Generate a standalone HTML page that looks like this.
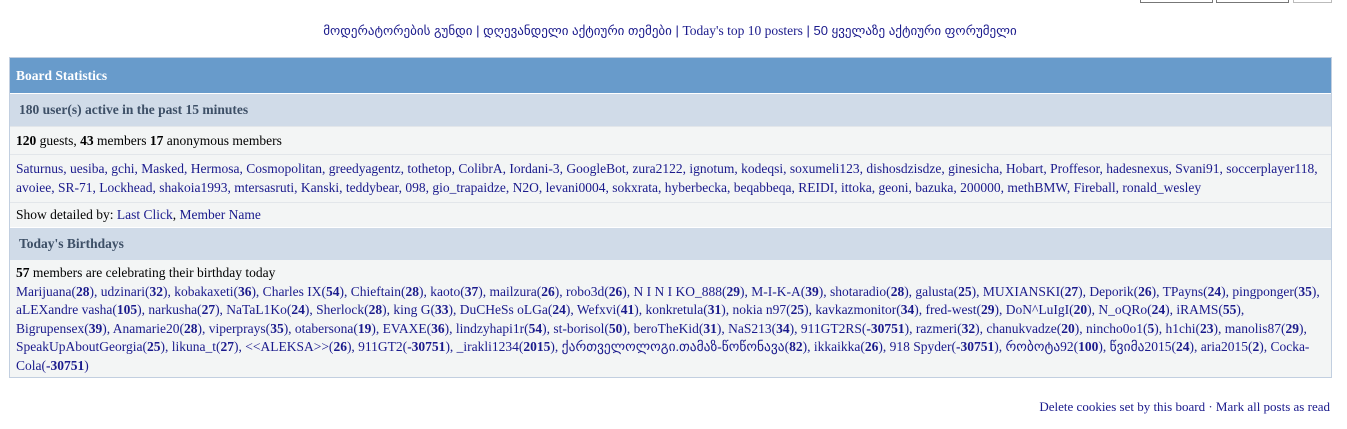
<!DOCTYPE html>
<html><head><meta charset="utf-8"><style>
body{margin:0;background:#fff;font-family:"Liberation Serif",serif;font-size:13.5px;color:#000;width:1347px;height:429px;overflow:hidden;position:relative}
a{color:#1a1a8c;text-decoration:none}
.btn{position:absolute;top:-6px;height:7px;border:1px solid #777;background:#fff}
.nav{position:absolute;top:23px;left:0;width:1340px;text-align:center;font-family:"Liberation Sans","DejaVu Sans",sans-serif;font-size:13px;color:#1a1a8c}
.box{position:absolute;left:9px;top:57px;width:1321px;height:319px;border:1px solid #c2cfe0;background:#f3f5f5}
.h1{height:35px;background:#689bcb;color:#fff;font-weight:bold;font-size:13.5px;line-height:36px;padding-left:6px}
.h2{height:32px;background:#d0dbe8;color:#3d4f66;font-weight:bold;font-size:13.5px;line-height:32px;padding-left:9px;border-top:1px solid #fff}
.row{padding-left:6px;border-top:1px solid #e2e6ea;white-space:nowrap}
b{font-weight:bold}
.ft{position:absolute;right:17px;top:399px;color:#1a1a8c;font-size:13px}
</style></head><body>
<div class="btn" style="left:1140px;width:71px"></div>
<div class="btn" style="left:1216px;width:71px;"></div>
<div class="btn" style="left:1293px;width:37px;border-color:#bbb"></div>
<div class="nav"><a>მოდერატორების გუნდი</a> | <a>დღევანდელი აქტიური თემები</a> | <a style="font-family:'Liberation Serif',serif;font-size:13.5px">Today's top 10 posters</a> | <a>50 ყველაზე აქტიური ფორუმელი</a></div>
<div class="box">
<div class="h1">Board Statistics</div>
<div class="h2">180 user(s) active in the past 15 minutes</div>
<div class="row" style="height:27px;line-height:28px"><b>120</b> guests, <b>43</b> members <b>17</b> anonymous members</div>
<div class="row" style="height:43px;line-height:19px;padding-top:4px"><a>Saturnus, uesiba, gchi, Masked, Hermosa, Cosmopolitan, greedyagentz, tothetop, ColibrA, Iordani-3, GoogleBot, zura2122, ignotum, kodeqsi, soxumeli123, dishosdzisdze, ginesicha, Hobart, Proffesor, hadesnexus, Svani91, soccerplayer118,</a><br><a>avoiee, SR-71, Lockhead, shakoia1993, mtersasruti, Kanski, teddybear, 098, gio_trapaidze, N2O, levani0004, sokxrata, hyberbecka, beqabbeqa, REIDI, ittoka, geoni, bazuka, 200000, methBMW, Fireball, ronald_wesley</a></div>
<div class="row" style="height:24px;line-height:23px">Show detailed by: <a>Last Click</a>, <a>Member Name</a></div>
<div class="h2">Today's Birthdays</div>
<div class="row" style="line-height:18.5px;padding-top:4px;border-top:none"><b>57</b> members are celebrating their birthday today<br>
<a>Marijuana(<b>28</b>), udzinari(<b>32</b>), kobakaxeti(<b>36</b>), Charles IX(<b>54</b>), Chieftain(<b>28</b>), kaoto(<b>37</b>), mailzura(<b>26</b>), robo3d(<b>26</b>), N I N I KO_888(<b>29</b>), M-I-K-A(<b>39</b>), shotaradio(<b>28</b>), galusta(<b>25</b>), MUXIANSKI(<b>27</b>), Deporik(<b>26</b>), TPayns(<b>24</b>), pingponger(<b>35</b>),</a><br>
<a>aLEXandre vasha(<b>105</b>), narkusha(<b>27</b>), NaTaL1Ko(<b>24</b>), Sherlock(<b>28</b>), king G(<b>33</b>), DuCHeSs oLGa(<b>24</b>), Wefxvi(<b>41</b>), konkretula(<b>31</b>), nokia n97(<b>25</b>), kavkazmonitor(<b>34</b>), fred-west(<b>29</b>), DoN^LuIgI(<b>20</b>), N_oQRo(<b>24</b>), iRAMS(<b>55</b>),</a><br>
<a>Bigrupensex(<b>39</b>), Anamarie20(<b>28</b>), viperprays(<b>35</b>), otabersona(<b>19</b>), EVAXE(<b>36</b>), lindzyhapi1r(<b>54</b>), st-borisol(<b>50</b>), beroTheKid(<b>31</b>), NaS213(<b>34</b>), 911GT2RS(<b>-30751</b>), razmeri(<b>32</b>), chanukvadze(<b>20</b>), nincho0o1(<b>5</b>), h1chi(<b>23</b>), manolis87(<b>29</b>),</a><br>
<a>SpeakUpAboutGeorgia(<b>25</b>), likuna_t(<b>27</b>), &lt;&lt;ALEKSA&gt;&gt;(<b>26</b>), 911GT2(<b>-30751</b>), _irakli1234(<b>2015</b>), ქართველოლოგი.თამაზ-წოწონავა(<b>82</b>), ikkaikka(<b>26</b>), 918 Spyder(<b>-30751</b>), რობოტა92(<b>100</b>), წვიმა2015(<b>24</b>), aria2015(<b>2</b>), Cocka-</a><br>
<a>Cola(<b>-30751</b>)</a></div>
</div>
<div class="ft">Delete cookies set by this board · Mark all posts as read</div>
</body></html>
